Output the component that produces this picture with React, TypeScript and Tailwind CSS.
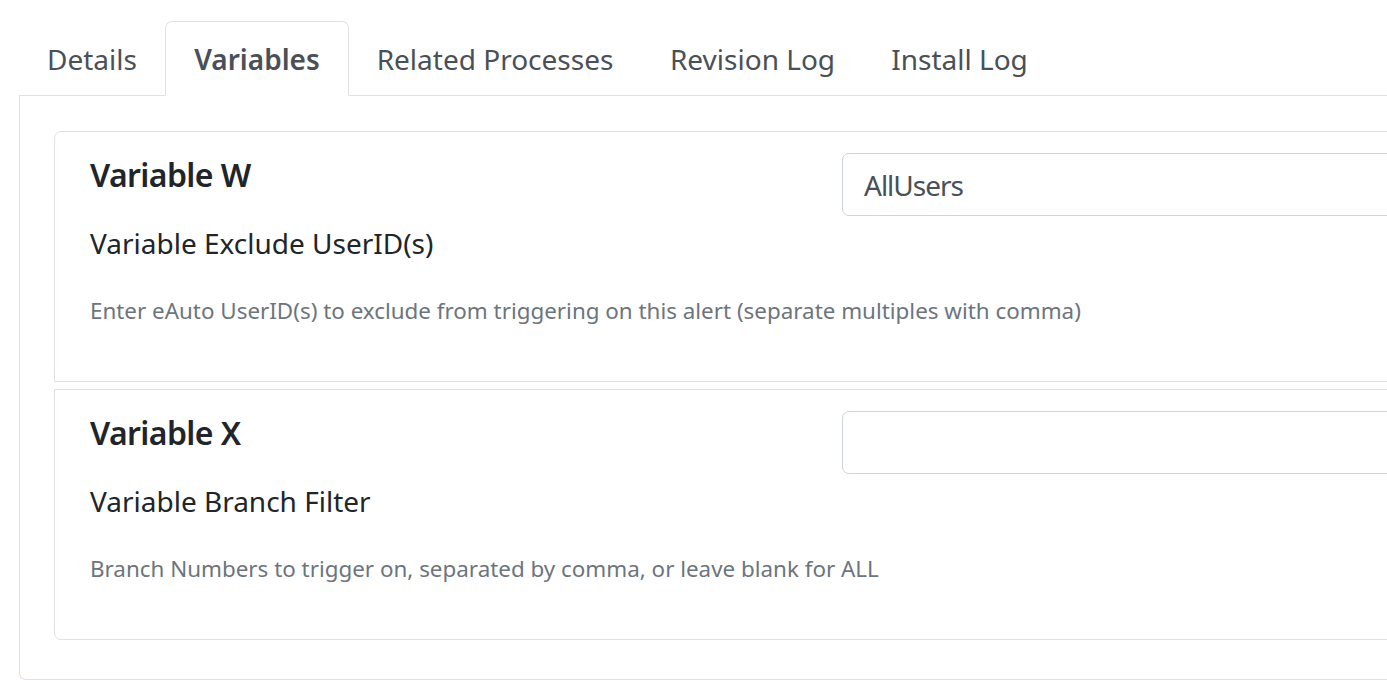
import React from "react";

const tabs = [
  { label: "Details", w: "w-[146px]", active: false },
  { label: "Variables", w: "w-[184px]", active: true },
  { label: "Related Processes", w: "w-[292px]", active: false },
  { label: "Revision Log", w: "w-[223px]", active: false },
  { label: "Install Log", w: "w-[191px]", active: false },
];

function VarCard({
  title,
  label,
  help,
  value,
  rounded,
}: {
  title: string;
  label: string;
  help: string;
  value: string;
  rounded: string;
}) {
  return (
    <div className={`flex h-[251px] border border-[#dee2e6] ${rounded}`}>
      <div className="w-[787px] shrink-0 pl-[35px] pt-[22px]">
        <div className="text-[32px] leading-[42px] font-semibold tracking-[-0.6px] text-[#212529]">{title}</div>
        <div className="mt-[26px] text-[28px] leading-[42px] text-[#212529]">{label}</div>
        <div className="mt-[29px] text-[22.4px] leading-[36px] text-[#6c757d] whitespace-nowrap">{help}</div>
      </div>
      <div className="pt-[21px]">
        <div className="w-[700px] h-[63px] border border-[#ced4da] rounded-[7px] flex items-center pl-[21px] text-[28px] tracking-[-1px] text-[#495057]">
          {value}
        </div>
      </div>
    </div>
  );
}

export default function App() {
  return (
    <div className="w-[1387px] h-[680px] overflow-hidden bg-white font-['Noto_Sans',sans-serif]">
      <div className="pl-[19px] pt-[21px] w-[1700px]">
        <div className="flex border-b border-[#dee2e6]">
          {tabs.map((t) => (
            <div
              key={t.label}
              className={`${t.w} h-[75px] -mb-px flex items-center justify-center text-[28px] text-[#495057] ${
                t.active
                  ? "font-semibold border border-[#dee2e6] border-b-white rounded-t-[7px] bg-white"
                  : "border border-transparent"
              }`}
            >
              {t.label}
            </div>
          ))}
        </div>
        <div className="border-x border-b border-[#dee2e6] rounded-b-[7px] pl-[34px] pt-[35px] pb-[39px]">
          <VarCard
            title="Variable W"
            label="Variable Exclude UserID(s)"
            help="Enter eAuto UserID(s) to exclude from triggering on this alert (separate multiples with comma)"
            value="AllUsers"
            rounded="rounded-t-[7px]"
          />
          <div className="h-[7px]" />
          <VarCard
            title="Variable X"
            label="Variable Branch Filter"
            help="Branch Numbers to trigger on, separated by comma, or leave blank for ALL"
            value=""
            rounded="rounded-b-[7px]"
          />
        </div>
      </div>
    </div>
  );
}
